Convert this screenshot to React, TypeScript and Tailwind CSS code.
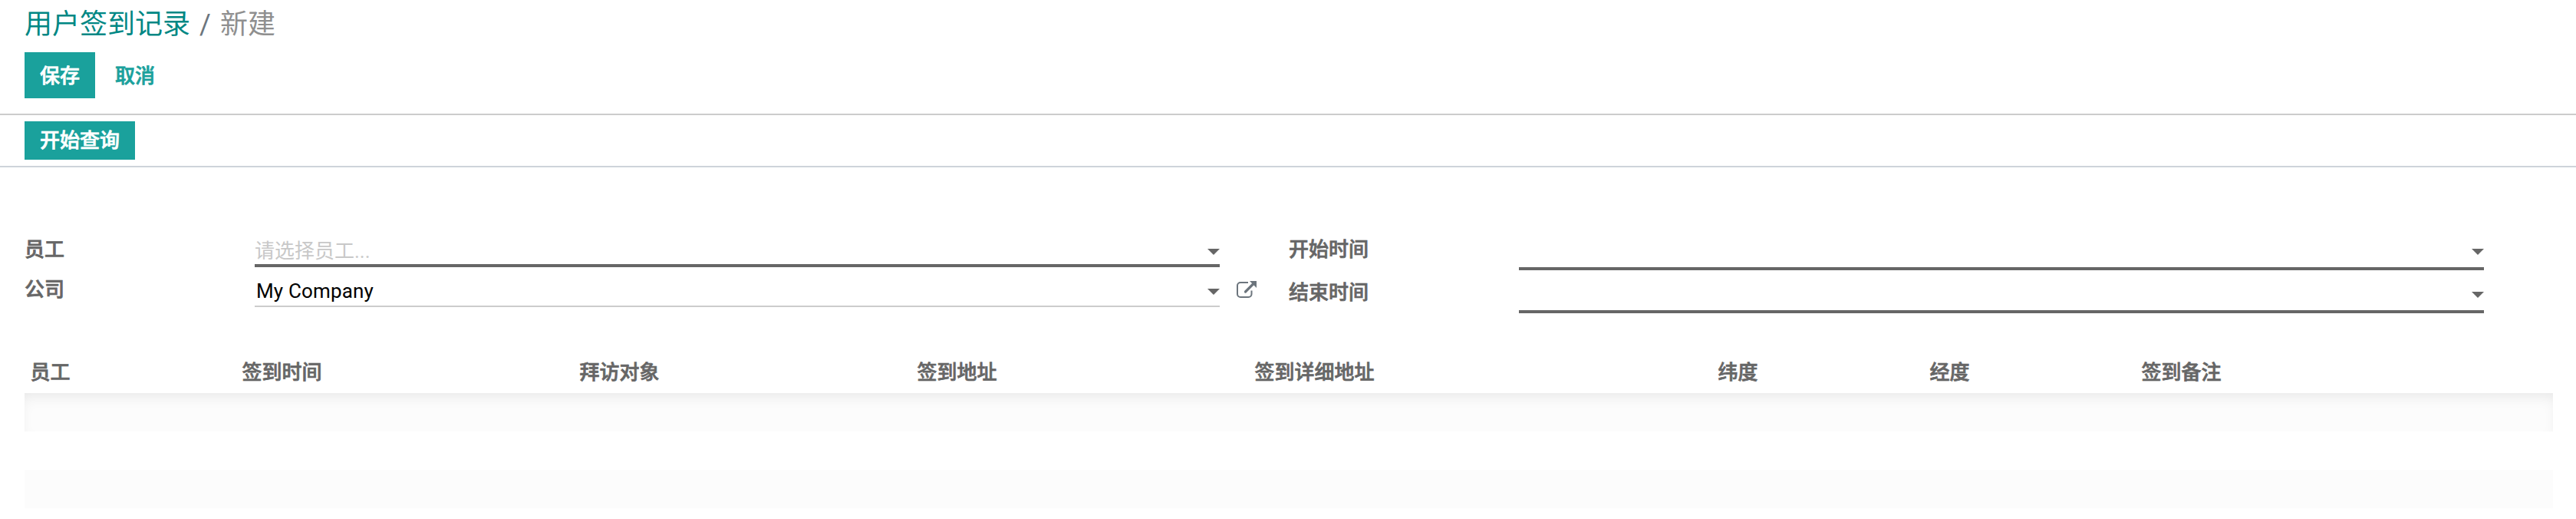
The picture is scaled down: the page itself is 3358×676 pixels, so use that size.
import type { ReactNode } from "react";

const columns = [
  { name: "员工", width: "w-[276px]" },
  { name: "签到时间", width: "w-[440px]" },
  { name: "拜访对象", width: "w-[440px]" },
  { name: "签到地址", width: "w-[440px]" },
  { name: "签到详细地址", width: "w-[604px]" },
  { name: "纬度", width: "w-[276px]" },
  { name: "经度", width: "w-[276px]" },
  { name: "签到备注", width: "w-[544px]" },
];

function Caret({ className }: { className: string }) {
  return (
    <svg className={`h-2 w-4 shrink-0 ${className}`} viewBox="0 0 16 8" fill="#666666">
      <path d="M0 0h16L8 8z" />
    </svg>
  );
}

function ExternalLink() {
  return (
    <svg className="ml-[22px] mt-3 h-[23px] w-[26px] shrink-0" viewBox="0 0 26 23" fill="none" stroke="#6c757d">
      <path d="M15 2H5a4 4 0 0 0-4 4v11a4 4 0 0 0 4 4h10.500a4 4 0 0 0 4-4v-4.500" strokeWidth="2" />
      <path d="M11.500 14L21.500 4" strokeWidth="3.2" strokeLinecap="round" />
      <path d="M17 0H26v9z" fill="#6c757d" stroke="none" />
    </svg>
  );
}

function Label({ children }: { children: ReactNode }) {
  return <div className="w-[300px] shrink-0 font-medium leading-[38px] [-webkit-text-stroke:0.7px]">{children}</div>;
}

export default function App() {
  return (
    <div className="h-[676px] w-[3358px] overflow-hidden bg-white font-['Roboto','Noto_Sans_CJK_SC',sans-serif] text-[26px] text-[#666666]">
      <header className="flex h-[150px] flex-col border-b-2 border-[#cccccc] px-8">
        <nav className="flex h-[68px] items-start text-[36px] leading-[65px]">
          <a className="text-[#008784]">用户签到记录</a>
          <span className="w-[39px] pl-3 text-[#6c757d]">/</span>
          <span className="text-[#8f8f8f]">新建</span>
        </nav>
        <div className="flex h-[60px] font-medium leading-[62px] [-webkit-text-stroke:0.7px]">
          <button className="w-[92px] bg-[#1aa19c] text-white">保存</button>
          <button className="w-[100px] pl-1 text-[#1aa19c]">取消</button>
        </div>
      </header>
      <div className="h-[68px] border-b-2 border-[#ced4da] px-8 pt-2">
        <button className="block h-[50px] w-36 bg-[#1aa19c] font-medium text-white [-webkit-text-stroke:0.7px]">开始查询</button>
      </div>
      <main className="px-8 pt-[88px]">
        <div className="flex h-[144px]">
          <section className="w-[1648px]">
            <div className="flex h-[42px]">
              <Label>员工</Label>
              <div className="flex h-[42px] w-[1258px] justify-between border-b-4 border-[#666666]">
                <span className="leading-[43px] text-[#c8c8c8]">请选择员工...</span>
                <Caret className="mt-[18px]" />
              </div>
            </div>
            <div className="flex pt-[6px]">
              <div className="pt-1"><Label>公司</Label></div>
              <div className="flex h-[46px] w-[1258px] justify-between border-b-2 border-[#cccccc]">
                <span className="pl-[2px] leading-[50px] tracking-[0.15px] text-black">My Company</span>
                <Caret className="mt-[22px]" />
              </div>
              <ExternalLink />
            </div>
          </section>
          <section>
            <div className="flex h-[56px]">
              <Label>开始时间</Label>
              <div className="flex h-[46px] w-[1258px] justify-end border-b-4 border-[#666666]">
                <Caret className="mt-[18px]" />
              </div>
            </div>
            <div className="flex h-[56px]">
              <Label>结束时间</Label>
              <div className="flex h-[46px] w-[1258px] justify-end border-b-4 border-[#666666]">
                <Caret className="mt-[18px]" />
              </div>
            </div>
          </section>
        </div>
        <table className="w-[3296px] table-fixed border-collapse">
          <thead>
            <tr className="h-[62px] text-left">
              {columns.map((column) => (
                <th key={column.name} className={`p-0 pl-[7.5px] pt-[10px] align-top font-medium leading-[50px] [-webkit-text-stroke:0.7px] ${column.width}`}>
                  {column.name}
                </th>
              ))}
            </tr>
          </thead>
          <tbody>
            <tr>
              <td colSpan={8} className="p-0">
                <div className="h-[50px] bg-[#fcfcfc] shadow-[inset_0_10px_20px_-8px_rgba(0,0,0,0.1)]" />
              </td>
            </tr>
            <tr className="h-[50px]"><td colSpan={8} /></tr>
            <tr className="h-[50px] bg-[#fcfcfc]"><td colSpan={8} /></tr>
          </tbody>
        </table>
      </main>
    </div>
  );
}
